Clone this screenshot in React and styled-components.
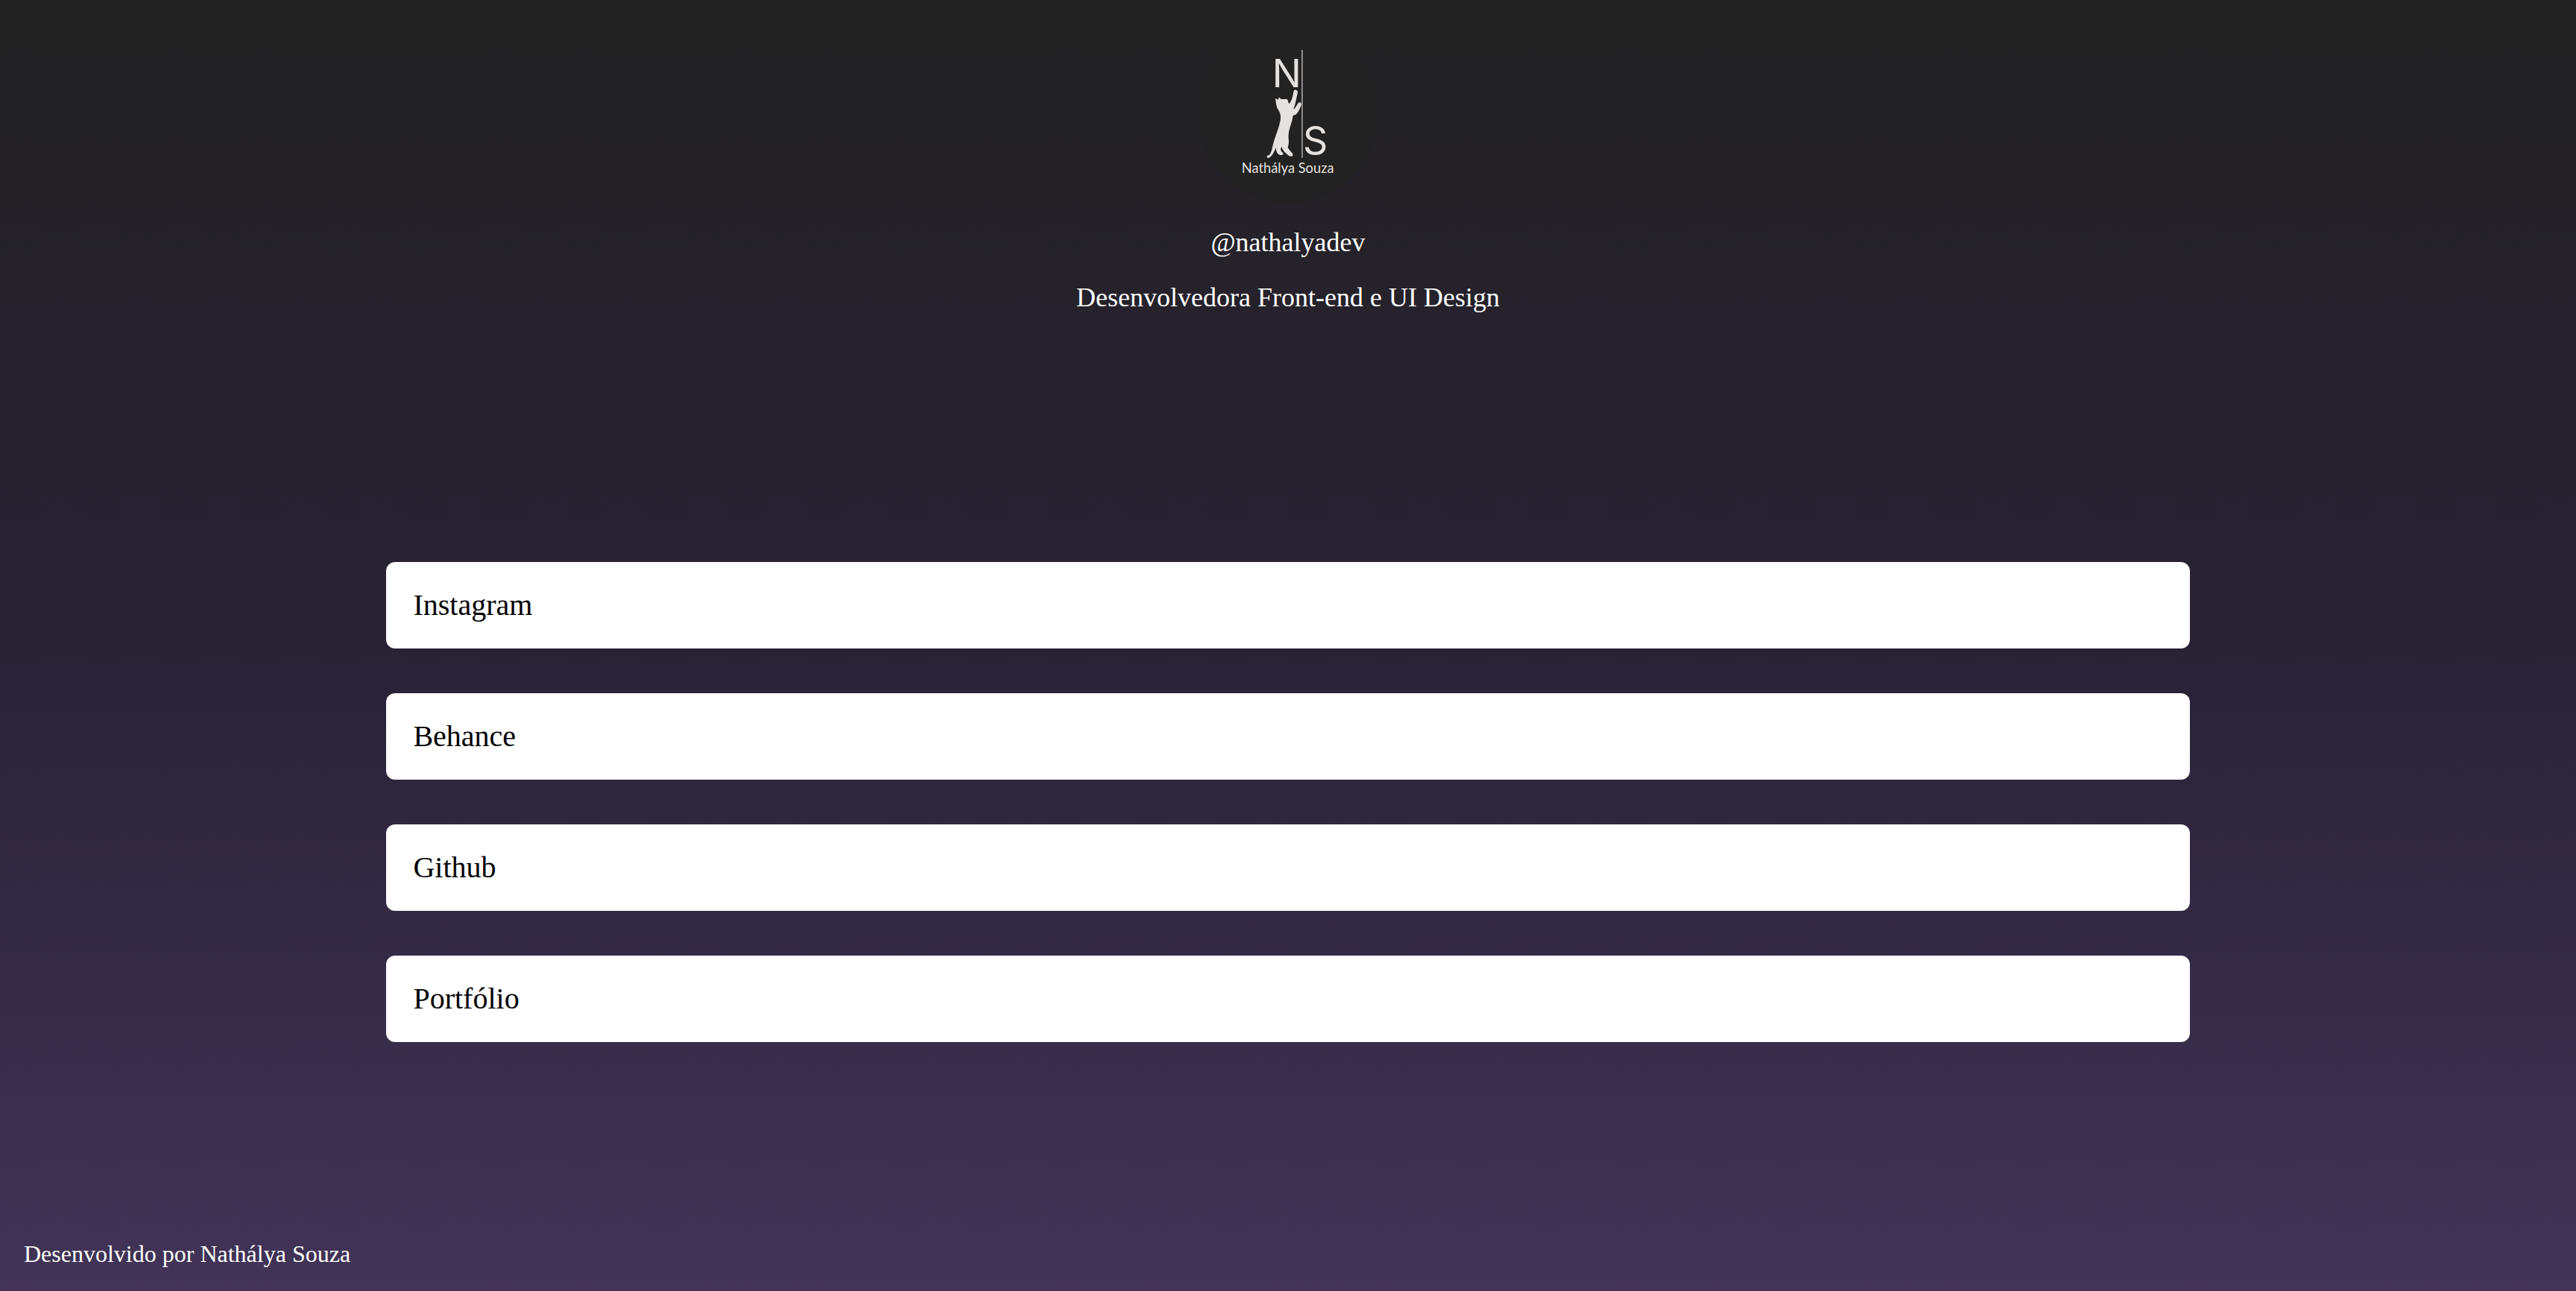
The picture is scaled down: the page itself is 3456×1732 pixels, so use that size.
import React from "react";
import styled, { createGlobalStyle } from "styled-components";

const GlobalStyle = createGlobalStyle`
  * { box-sizing: border-box; margin: 0; padding: 0; }
  body {
    font-family: "Liberation Serif", "Times New Roman", serif;
    color: #fff;
  }
`;

const Page = styled.div`
  display: flex;
  flex-direction: column;
  min-height: 100vh;
  background: linear-gradient(180deg, #222222 0%, #292235 50%, #413457 100%);
`;

const Profile = styled.header`
  display: flex;
  flex-direction: column;
  align-items: center;
  gap: 32px;
  padding-top: 32px;
  font-size: 36px;
  line-height: 42px;
`;

const Avatar = styled.svg`
  width: 240px;
  height: 240px;
  border-radius: 50%;
  background: #222222;
`;

const Handle = styled.h1`
  font-size: inherit;
  font-weight: 400;
`;

const Role = styled.p``;

const Links = styled.ul`
  display: flex;
  flex: 1;
  flex-direction: column;
  justify-content: center;
  gap: 60px;
  width: 70%;
  margin: 0 auto;
  padding-top: 100px;
  list-style: none;
`;

const LinkCard = styled.a`
  display: block;
  padding: 36px;
  border-radius: 12px;
  background: #fff;
  color: #000;
  font-size: 40px;
  line-height: 44px;
  text-decoration: none;
`;

const Footer = styled.footer`
  padding: 32px;
  font-size: 32px;
  line-height: 36px;
`;

const links = ["Instagram", "Behance", "Github", "Portfólio"];

function Logo() {
  return (
    <Avatar viewBox="54 96 720 720" role="img" aria-label="Nathálya Souza">
      <g fill="#e5e1de">
        <g fontFamily="Inter, sans-serif" fontSize="156">
          <text x="350" y="352">N</text>
          <text x="474" y="620">S</text>
        </g>
        <text x="413" y="695" textAnchor="middle" fontFamily="Lato, sans-serif" fontSize="55">
          Nathálya Souza
        </text>
        <path d="M363 396L375 401L378 391L386 399L409 399Q415 402 415 410L418 418C428 408 432 394 437 366C441 358 454 362 453 372C448 394 444 420 436 440C446 434 448 424 456 414C462 408 470 416 467 424C460 442 452 460 441 463L434 465C432 490 420 512 417 534C413 560 422 572 413 592C418 606 434 616 434 624C432 632 420 630 414 624C404 616 396 608 392 600L388 590C382 602 384 606 394 616C398 623 390 626 380 623C370 618 366 610 365 594C360 606 350 634 334 636C326 634 328 626 338 624C350 612 350 590 358 566C366 540 378 515 384 480C386 458 378 446 371 436C366 424 366 412 363 396Z" />
      </g>
      <path d="M471 201V635" stroke="#a3a1a0" strokeWidth="5" />
    </Avatar>
  );
}

export default function App() {
  return (
    <Page>
      <GlobalStyle />
      <Profile>
        <Logo />
        <Handle>@nathalyadev</Handle>
        <Role>Desenvolvedora Front-end e UI Design</Role>
      </Profile>
      <Links>
        {links.map((name) => (
          <li key={name}>
            <LinkCard href={`#${name.toLowerCase()}`}>{name}</LinkCard>
          </li>
        ))}
      </Links>
      <Footer>Desenvolvido por Nathálya Souza</Footer>
    </Page>
  );
}
